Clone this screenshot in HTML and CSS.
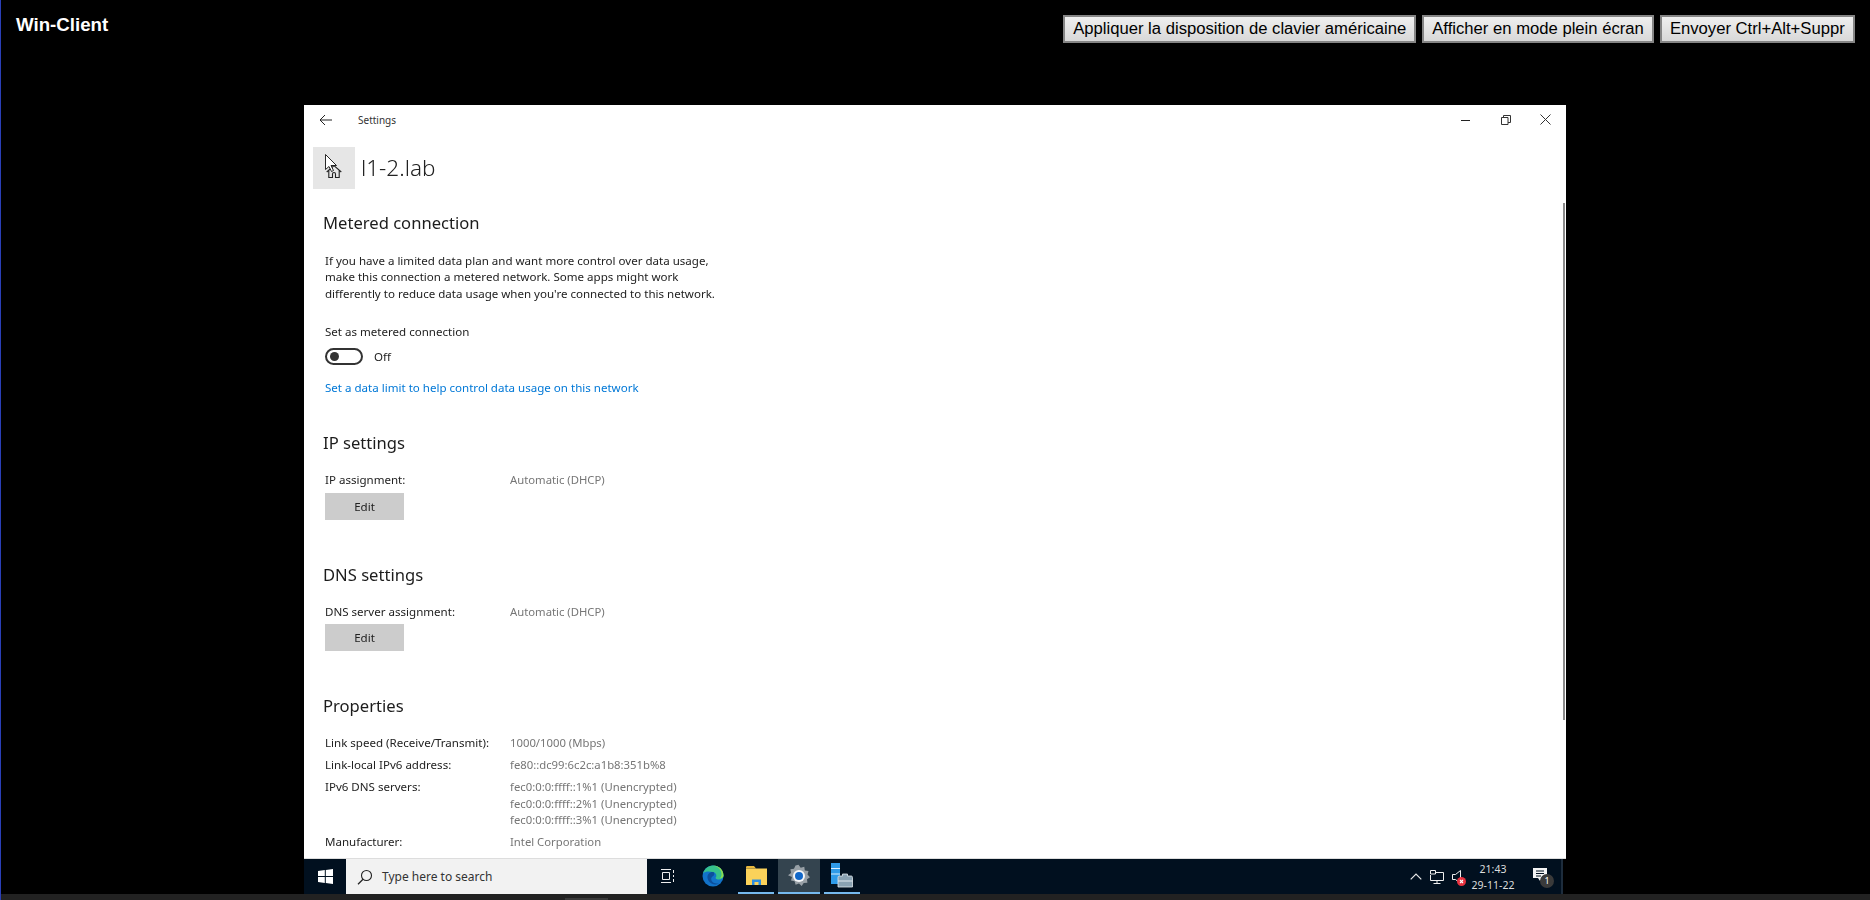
FILE: index.html
```html
<!DOCTYPE html>
<html lang="en">
<head>
    <meta charset="UTF-8">
    <title>Win-Client</title>
    <link rel="stylesheet" href="styles.css">
</head>
<body>
    <div class="topbar">
        <h1 class="clientName">Win-Client</h1>
        <div class="actions">
            <button class="actionBtn">Appliquer la disposition de clavier américaine</button>
            <button class="actionBtn">Afficher en mode plein écran</button>
            <button class="actionBtn">Envoyer Ctrl+Alt+Suppr</button>
        </div>
    </div>

    <div class="screen">
        <div class="settings">
            <div class="titlebar">
                <svg class="backIcon" width="14" height="12" viewBox="0 0 14 12"><path d="M13 6H1M6 1L1 6l5 5" fill="none" stroke="#222" stroke-width="1"/></svg>
                <span class="appName">Settings</span>
                <div class="winControls">
                    <svg width="10" height="10" viewBox="0 0 10 10"><path d="M0 5.5h9" stroke="#222" stroke-width="1"/></svg>
                    <svg width="10" height="10" viewBox="0 0 10 10"><path d="M.5 2.5h6.500v7h-6.500zM2.500 2.500v-2h7v7h-2.500" fill="none" stroke="#333" stroke-width="1"/></svg>
                    <svg width="11" height="11" viewBox="0 0 11 11"><path d="M.5 .5l10 10M10.500 .5l-10 10" stroke="#333" stroke-width="1"/></svg>
                </div>
            </div>

            <div class="pageHead">
                <div class="homeBtn">
                    <svg width="16" height="13" viewBox="0 0 16 13"><path d="M.7 7L8 .7 15.300 7M2.800 5.500v7h3.700V9c0-2 3-2 3 0v3.500h3.700v-7" fill="none" stroke="#222" stroke-width="1.100"/></svg>
                    <svg class="cursor" width="13" height="18" viewBox="0 0 13 18"><path d="M.5 .5v15l3.500-3 2.500 5 2-1-2.500-5h5.500z" fill="#fff" stroke="#111" stroke-width=".9"/></svg>
                </div>
                <div class="pageTitle">l1-2.lab</div>
            </div>

            <div class="content">
                <h2 class="sectionTitle">Metered connection</h2>
                <p class="note">If you have a limited data plan and want more control over data usage,<br>make this connection a metered network. Some apps might work<br>differently to reduce data usage when you're connected to this network.</p>
                <div class="fieldLabel">Set as metered connection</div>
                <div class="toggleRow">
                    <span class="toggle"><span class="knob"></span></span>
                    <span>Off</span>
                </div>
                <a class="link">Set a data limit to help control data usage on this network</a>

                <h2 class="sectionTitle ipTitle">IP settings</h2>
                <div class="row"><span class="key">IP assignment:</span><span class="val">Automatic (DHCP)</span></div>
                <div class="editBtn">Edit</div>

                <h2 class="sectionTitle dnsTitle">DNS settings</h2>
                <div class="row"><span class="key">DNS server assignment:</span><span class="val">Automatic (DHCP)</span></div>
                <div class="editBtn">Edit</div>

                <h2 class="sectionTitle dnsTitle">Properties</h2>
                <div class="props">
                    <div class="row"><span class="key">Link speed (Receive/Transmit):</span><span class="val">1000/1000 (Mbps)</span></div>
                    <div class="row"><span class="key">Link-local IPv6 address:</span><span class="val">fe80::dc99:6c2c:a1b8:351b%8</span></div>
                    <div class="row"><span class="key">IPv6 DNS servers:</span><span class="val">fec0:0:0:ffff::1%1 (Unencrypted)<br>fec0:0:0:ffff::2%1 (Unencrypted)<br>fec0:0:0:ffff::3%1 (Unencrypted)</span></div>
                    <div class="row"><span class="key">Manufacturer:</span><span class="val">Intel Corporation</span></div>
                </div>
            </div>
            <div class="scrollThumb"></div>
        </div>

        <div class="taskbar">
            <div class="startBtn">
                <svg width="15" height="15" viewBox="0 0 15 15"><path d="M0 2.100L6.800 1.100V7H0zM7.800 1L15 0v7H7.800zM0 8h6.800v5.900L0 13zM7.800 8H15v7l-7.200-1z" fill="#fff"/></svg>
            </div>
            <div class="searchBox">
                <svg width="16" height="16" viewBox="0 0 16 16"><circle cx="9.500" cy="6.500" r="5" fill="none" stroke="#222" stroke-width="1.100"/><path d="M6 10.200L1 15.300" stroke="#222" stroke-width="1.300"/></svg>
                <span>Type here to search</span>
            </div>
            <div class="taskIcon taskView">
                <svg width="14" height="14" viewBox="0 0 14 14"><path d="M0 .5h10M0 13.500h10M1.500 3.500h7v7h-7zM12.500 1v3M12.500 6v2M12.500 10v3" fill="none" stroke="#eee" stroke-width="1"/></svg>
            </div>
            <div class="taskIcon">
                <svg width="22" height="22" viewBox="0 0 22 22">
                    <circle cx="11" cy="11" r="10.500" fill="#1273c9"/>
                    <path d="M1 8.500C2.500 3.500 6.500 .5 11 .5c6 0 10.500 4.500 10.500 10 0 2.500-2 4-4.500 4-2 0-3.500-.8-3.500-1.800 1.500-1.200 1.200-5-2.500-5.700C7 6.300 3.500 6 1 8.500z" fill="#36c18b"/>
                    <path d="M11.500 7c-3.500-.5-6.500 2-6 6 .5 3 3 6 7.500 6.500 1.500 0 3-.5 4-1.300-3 .8-6.500-.2-7.500-2.700-1-2.500.5-4 2-4.800 1-.5 1-2.700 0-3.700z" fill="#0c4f9c"/>
                    <path d="M21.500 10.500c0-5.500-4.500-10-10.500-10 5 1 8 4 8.500 8 .2 2-.5 3.500-1.500 5 2-.5 3.500-1.500 3.500-3z" fill="#8fdc4e"/>
                </svg>
            </div>
            <div class="taskIcon running">
                <svg width="21" height="19" viewBox="0 0 21 19">
                    <path d="M0 1.500C0 .7.500 0 1.200 0H8l2 2.500H0z" fill="#e8b83e"/>
                    <path d="M0 2.500h21V19H0z" fill="#fbd25a"/>
                    <path d="M6 13.500h9V19h-2.500v-3h-4v3H6z" fill="#2f8fe0"/>
                </svg>
            </div>
            <div class="taskIcon running active">
                <svg width="24" height="24" viewBox="0 0 24 24">
                    <path d="M12 1.500l2.200 3 3.600-1 .5 3.700 3.700.6-1 3.600 2.500 2.600-3 2 .4 3.500-3.700.2-2 3-2.700-2.300-3.400 1.200-1-3.500-3.600-.8 1-3.500L1.500 12l3-2.300-.6-3.600 3.600-.5L9 2.200z" fill="#98a0a6" transform="translate(-.5 -.8)"/>
                    <circle cx="12" cy="12" r="6" fill="#f4f6f8"/>
                    <circle cx="12" cy="12" r="4" fill="#1167c8"/>
                </svg>
            </div>
            <div class="taskIcon running">
                <svg width="22" height="25" viewBox="0 0 22 25">
                    <path d="M0 0h9v21H0z" fill="#2f9be8"/>
                    <path d="M0 5.500h9M0 11h9" stroke="#d8efff" stroke-width="1"/>
                    <path d="M7 14.500c0-1 .6-1.500 1.500-1.500h3v-2h5v2H20c1 0 1.500.5 1.500 1.500V24H7z" fill="#8aa2b2" stroke="#dfe8ee" stroke-width=".8"/>
                    <path d="M7 18h14.500" stroke="#dfe8ee" stroke-width="1"/>
                </svg>
            </div>

            <div class="tray">
                <svg class="chevron" width="12" height="7" viewBox="0 0 12 7"><path d="M.7 6.300L6 1l5.300 5.300" fill="none" stroke="#e8e8e8" stroke-width="1.200"/></svg>
                <svg class="netIcon" width="14" height="14" viewBox="0 0 14 14"><path d="M3 2.500h10.500v8H.5V5M7 10.500v3M3.500 13.500h7" fill="none" stroke="#eee" stroke-width="1"/><path d="M.5 .5h5v3.500h-5z" fill="#01101f" stroke="#eee" stroke-width="1"/></svg>
                <span class="soundIcon">
                    <svg width="9" height="14" viewBox="0 0 9 14"><path d="M.5 4.500h3L8.500 .5v13l-5-4h-3z" fill="none" stroke="#eee" stroke-width="1"/></svg>
                    <svg class="muteBadge" width="9" height="9" viewBox="0 0 9 9"><circle cx="4.500" cy="4.500" r="4.500" fill="#e8323f"/><path d="M3 3l3 3M6 3L3 6" stroke="#fff" stroke-width="1.100"/></svg>
                </span>
                <div class="clock"><div>21:43</div><div>29-11-22</div></div>
                <div class="notify">
                    <svg width="14" height="13" viewBox="0 0 14 13"><path d="M0 0h14v10H9l-2 3-2-3H0z" fill="#f4f4f4"/><path d="M3 3h8M3 5.500h8M3 8h5" stroke="#01101f" stroke-width="1"/></svg>
                    <span class="notifyCount">1</span>
                </div>
            </div>
        </div>
    </div>

    <div class="bottomStrip"><div class="stripThumb"></div></div>
</body>
</html>
```

FILE: styles.css
```css
* {
    margin: 0;
    padding: 0;
    box-sizing: border-box;
}
html, body {
    height: 100%;
    overflow: hidden;
}
body {
    background-color: #000;
    border-left: 1px solid #2a3fb8;
    font-family: "Liberation Sans", Arial, sans-serif;
    display: flex;
    flex-direction: column;
}

/* top bar of the client */
.topbar {
    height: 105px;
    flex: none;
    display: flex;
    justify-content: space-between;
    align-items: flex-start;
    padding: 15px 15px 0 15px;
}
.clientName {
    color: #fff;
    font-size: 18.700px;
    line-height: 20px;
    font-weight: bold;
}
.actions {
    display: flex;
    gap: 5.500px;
}
.actionBtn {
    height: 28px;
    padding: 0 8.300px;
    font-family: "Liberation Sans", Arial, sans-serif;
    font-size: 16.650px;
    color: #000;
    background: linear-gradient(#efefef, #d8d8d8);
    border: 2px solid #858585;
}

/* remote screen */
.screen {
    width: 1262px;
    height: 789px;
    flex: none;
    margin-left: 303px;
    display: flex;
    flex-direction: column;
    font-family: "Noto Sans", "Open Sans", sans-serif;
    filter: blur(.3px);
}
.settings {
    position: relative;
    flex: 1;
    min-height: 0;
    overflow: hidden;
    background-color: #fff;
    color: #222;
    font-size: 11.550px;
    border-bottom: 1px solid #ddd;
}
.titlebar {
    height: 29px;
    display: flex;
    align-items: center;
    padding-left: 15px;
}
.appName {
    margin-left: 25px;
    font-size: 10px;
    color: #333;
    padding-top: 1px;
}
.winControls {
    margin-left: auto;
    width: 90px;
    margin-right: 15px;
    display: flex;
    justify-content: space-between;
    align-items: center;
}
.pageHead {
    display: flex;
    align-items: center;
    gap: 6px;
    margin: 13px 0 0 9px;
}
.homeBtn {
    position: relative;
    width: 42px;
    height: 42px;
    background-color: #e6e6e6;
    display: flex;
    align-items: center;
    justify-content: center;
    padding-top: 6px;
}
.cursor {
    position: absolute;
    left: 12px;
    top: 7px;
}
.pageTitle {
    font-size: 22.500px;
    font-weight: 300;
    color: #222;
    line-height: 42px;
}
.content {
    padding: 23px 0 0 21px;
}
.sectionTitle {
    font-size: 16.600px;
    font-weight: 400;
    line-height: 22px;
    color: #1c1c1c;
    margin-left: -2px;
}
.note {
    margin-top: 18.500px;
    line-height: 16.500px;
}
.fieldLabel {
    margin-top: 22px;
    line-height: 16px;
}
.toggleRow {
    display: flex;
    align-items: center;
    gap: 11px;
    margin-top: 8px;
}
.toggle {
    width: 38px;
    height: 17px;
    border: 2px solid #333;
    border-radius: 9px;
    display: flex;
    align-items: center;
    padding-left: 3px;
}
.knob {
    width: 9px;
    height: 9px;
    border-radius: 50%;
    background-color: #333;
}
.link {
    display: block;
    margin-top: 15px;
    color: #0078d7;
    line-height: 16px;
}
.ipTitle {
    margin-top: 36px;
}
.dnsTitle {
    margin-top: 44px;
}
.row {
    display: flex;
    line-height: 16.500px;
}
.sectionTitle + .row {
    margin-top: 18px;
}
.key {
    width: 185px;
    flex: none;
}
.val {
    color: #767676;
    font-size: 11.300px;
}
.editBtn {
    width: 79px;
    height: 27px;
    margin-top: 4px;
    background-color: #ccc;
    text-align: center;
    line-height: 27px;
}
.props {
    margin-top: 18px;
    display: flex;
    flex-direction: column;
    gap: 5.500px;
}
.scrollThumb {
    position: absolute;
    right: 1px;
    top: 98px;
    width: 2px;
    height: 517px;
    background-color: #8a8a8a;
}

/* windows taskbar */
.taskbar {
    height: 35px;
    flex: none;
    margin-right: 3px;
    display: flex;
    background-color: #01101f;
    color: #eee;
    border-right: 2px solid #1d2c3c;
}
.startBtn {
    width: 42px;
    display: flex;
    align-items: center;
    justify-content: center;
}
.searchBox {
    width: 301px;
    background-color: #f2f2f2;
    color: #333;
    font-size: 12px;
    display: flex;
    align-items: center;
    gap: 9px;
    padding-left: 11px;
}
.taskIcon {
    width: 42px;
    display: flex;
    align-items: center;
    justify-content: center;
    border-bottom: 2px solid transparent;
    margin-right: 4px;
}
.taskView {
    width: 42px;
    margin-right: 3px;
}
.running {
    border-bottom-color: #76b9ed;
    width: 36px;
}
.active {
    background-color: #34444f;
    width: 42px;
}
.tray {
    margin-left: auto;
    display: flex;
    align-items: center;
    padding-right: 14px;
}
.chevron {
    margin-right: 8px;
}
.netIcon {
    margin-right: 8px;
}
.soundIcon {
    position: relative;
    display: flex;
}
.muteBadge {
    position: absolute;
    left: 5px;
    top: 7px;
}
.clock {
    width: 64px;
    text-align: center;
    font-size: 10.500px;
    line-height: 16px;
    color: #ddd;
}
.notify {
    position: relative;
    margin-left: 8px;
    display: flex;
    margin-top: -4px;
}
.notifyCount {
    position: absolute;
    left: 7px;
    top: 6px;
    width: 14px;
    height: 14px;
    border-radius: 50%;
    background-color: #3a3a3a;
    color: #fff;
    font-size: 9px;
    line-height: 14px;
    text-align: center;
}
.bottomStrip {
    flex: 1;
    background-color: #222;
    margin-left: -1px;
    padding: 4px 0 0 565px;
}
.stripThumb {
    width: 43px;
    height: 2px;
    background-color: #3a3a3a;
}
```
